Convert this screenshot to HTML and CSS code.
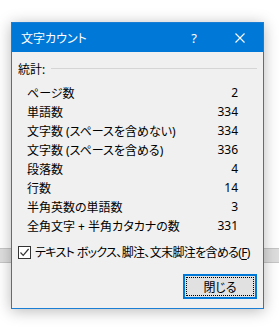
FILE: index.html
```html
<!DOCTYPE html>
<html lang="ja">
<head>
<meta charset="UTF-8">
<title>文字カウント</title>
<link rel="stylesheet" href="styles.css">
</head>
<body>

<div class="dialog">
  <!-- title bar -->
  <div class="titlebar">
    <span class="title">文字カウント</span>
    <span class="tb-btn">?</span>
    <span class="tb-btn">
      <svg width="10" height="10" viewBox="0 0 10 10"><path d="M0.5 0.5 L9.5 9.5 M9.5 0.5 L0.5 9.5" stroke="#fff" stroke-width="1.1" fill="none"/></svg>
    </span>
  </div>

  <div class="content">
    <div class="group-head">
      <span>統計:</span>
      <span class="group-line"></span>
    </div>

    <div class="stats">
      <div class="row"><span>ページ数</span><span>2</span></div>
      <div class="row"><span>単語数</span><span>334</span></div>
      <div class="row"><span>文字数 (スペースを含めない)</span><span>334</span></div>
      <div class="row"><span>文字数 (スペースを含める)</span><span>336</span></div>
      <div class="row"><span>段落数</span><span>4</span></div>
      <div class="row"><span>行数</span><span>14</span></div>
      <div class="row"><span>半角英数の単語数</span><span>3</span></div>
      <div class="row"><span>全角文字 + 半角カタカナの数</span><span>331</span></div>
    </div>

    <label class="check">
      <span class="box">
        <svg width="11" height="11" viewBox="0 0 11 11"><path d="M1.5 5.5 L4.2 8.3 L9.6 2" stroke="#333" stroke-width="1.2" fill="none"/></svg>
      </span>
      <span class="check-text">テキスト ボックス、脚注、文末脚注を含める(<u>F</u>)</span>
    </label>

    <div class="actions">
      <button class="btn">閉じる</button>
    </div>
  </div>
</div>

</body>
</html>
```

FILE: styles.css
```css
body {
margin: 0;
padding: 22px 0 0 11px;
height: 333px;
box-sizing: border-box;
font-family: "Noto Sans", "Noto Sans CJK JP", sans-serif;
font-size: 12px;
font-feature-settings: "palt";
color: #000;
background: linear-gradient(to bottom, #fff 248px, #c6c6c6 248px, #c6c6c6 249px, #dedede 249px, #dedede 262px, #c6c6c6 262px, #c6c6c6 263px, #fff 263px);
}
.dialog {
width: 253px;
height: 287px;
box-sizing: border-box;
border: 1px solid #1a7fd4;
background-color: #f0f0f0;
box-shadow: 0 2px 14px rgba(0,0,0,0.28);
display: flex;
flex-direction: column;
}
.titlebar {
height: 29px;
background-color: #0078d7;
color: #fff;
display: flex;
align-items: center;
}
.title {
flex: 1;
padding-left: 9px;
font-size: 12px;
}
.tb-btn {
width: 46px;
height: 29px;
display: flex;
align-items: center;
justify-content: center;
font-size: 13px;
}
.content {
flex: 1;
display: flex;
flex-direction: column;
}
.group-head {
display: flex;
align-items: center;
height: 16px;
margin-top: 9px;
padding-left: 6px;
padding-right: 6px;
}
.group-line {
flex: 1;
height: 1px;
background-color: #d5d5d5;
margin-left: 6px;
margin-top: -1px;
}
.stats {
margin-top: 6px;
padding-left: 15px;
padding-right: 25px;
}
.row {
height: 19px;
display: flex;
align-items: center;
justify-content: space-between;
}
.check {
display: flex;
align-items: center;
height: 16px;
margin-top: 9px;
padding-left: 6px;
white-space: nowrap;
}
.check-text {
letter-spacing: -0.65px;
}
.box {
width: 11px;
height: 11px;
flex-shrink: 0;
border: 1px solid #333;
background-color: #fff;
margin-right: 4px;
display: flex;
}
.check u {
text-decoration-thickness: 1px;
text-underline-offset: 2px;
}
.actions {
display: flex;
justify-content: flex-end;
margin-top: 14px;
padding-right: 6px;
}
.btn {
width: 74px;
height: 25px;
border: 2px solid #0078d7;
background-color: #e1e1e1;
font-family: "Noto Sans", "Noto Sans CJK JP", sans-serif;
font-size: 12px;
font-feature-settings: "palt";
color: #000;
outline: 1px dotted #000;
outline-offset: -4px;
padding: 0;
}
```
